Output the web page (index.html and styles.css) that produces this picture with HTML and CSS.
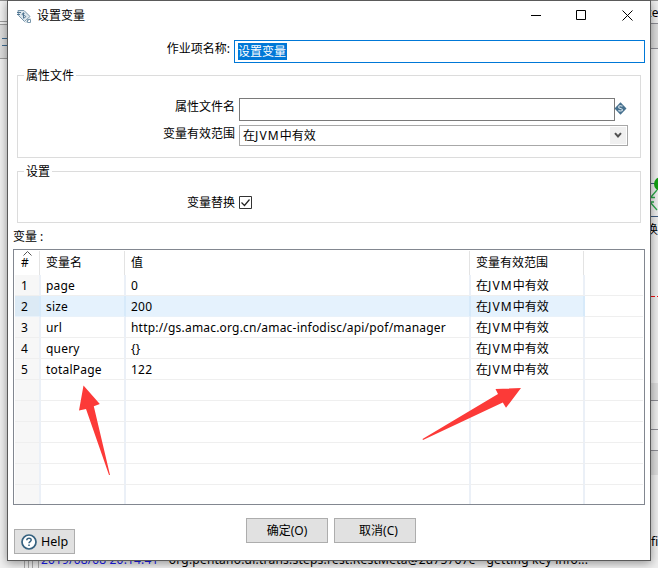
FILE: index.html
```html
<!DOCTYPE html>
<html lang="zh-CN">
<head>
<meta charset="utf-8">
<title>设置变量</title>
<link rel="stylesheet" href="styles.css">
</head>
<body>
<svg class="desktop" width="658" height="568" viewBox="0 0 658 568">
  <rect width="658" height="568" fill="#f0f0f0"/>
  <path fill="#909090" d="M0 0h658v1H0z"/>
  <path fill="#f1f1f1" d="M0 1h8v20H0z"/>
  <path stroke="#9a9a9a" d="M0 21.5h8M0 24.5h8M0 58.5h8"/>
  <path fill="#dcdcdc" d="M0 25h8v33H0z"/>
  <path stroke="#3d6b91" d="M2 38.5h6M2 45.5h6"/>
  <path fill="#eeeeee" d="M650 1h8v567h-8z"/>
  <path fill="#dcdcdc" d="M650 24h8v24h-8zM650 383h8v17h-8zM650 450h8v25h-8z"/>
  <path stroke="#8d8d94" d="M650 23.5h8M650 48.5h8M650 400.5h8M650 429.5h8M650 450.5h8"/>
  <path stroke="#3d5a80" d="M650 183.5h8M650 216.5h8"/>
  <circle cx="661" cy="184" r="7" fill="#12a012"/>
  <path stroke="#2aa84a" fill="none" stroke-width="1.3" d="M657 190l-6 7M650 197.500h5M650 202h4M650 202l7 8"/>
  <path stroke="#f01010" stroke-dasharray="5 2" d="M650 296.5h8"/>
  <path stroke="#aaa" d="M24.5 560v8M28.5 560v8M32.5 560v8M38.5 560v8"/>
</svg>
<span class="behind behind-top">ce</span>
<span class="behind behind-step">换</span>
<span class="behind behind-fi">fi</span>
<div class="behind log"><span class="stamp">2019/08/08 20:14:41</span><span class="message"> - org.pentano.di.trans.steps.rest.RestMeta@2d75767e - getting key info...</span></div>

<main class="dialog">
  <header class="titlebar">
    <svg class="app-icon" width="15" height="15" viewBox="0 0 15 15" fill="none" stroke="#7896ab">
      <path d="M1 1.500h6l6 6-5.500 5-6-6z" fill="#dce6ec"/>
      <path d="M0 3.500h4M0 5.500h3M7.500 4.500c-3-1-3 2-.5 2s2 3-1 2M6.500 3.500v6" stroke="#4f7592"/>
      <path d="M10.500 10.500h3v3h-3zM9 13.500l4-4"/>
    </svg>
    <h1>设置变量</h1>
    <svg class="window-controls" width="106" height="14" viewBox="0 0 106 14" fill="none" stroke="#000">
      <path d="M3 7.500h10M48.500 2.500h9v9h-9zM94.500 2.500l10 10M104.500 2.500l-10 10"/>
    </svg>
  </header>
  <div class="name-row">
    <label>作业项名称:</label>
    <div class="input focused"><span class="selection">设置变量</span></div>
  </div>
  <section class="group file-group">
    <h2>属性文件</h2>
    <div class="field-row file-row">
      <label>属性文件名</label>
      <div class="input"></div>
      <svg width="13" height="13" viewBox="0 0 13 13"><path d="M6.500 0.300l6 6.200-6 6.200-6-6.200z" fill="#47718f"/><path d="M8.500 4.300C6.500 3 4.500 4 4.700 5.300c.3 1.500 3.500.8 3.700 2.400.1 1.400-2.300 1.800-4 .8" fill="none" stroke="#dce7ee" stroke-width="1.100"/></svg>
    </div>
    <div class="field-row scope-row">
      <label>变量有效范围</label>
      <div class="select"><span>在<b>JVM</b>中有效</span><i><svg width="8" height="7" viewBox="0 0 8 7"><path d="M1 1.200l3 3.300 3-3.300" fill="none" stroke="#505050" stroke-width="2"/></svg></i></div>
    </div>
  </section>
  <section class="group settings-group">
    <h2>设置</h2>
    <div class="field-row">
      <label>变量替换</label>
      <svg width="13" height="13" viewBox="0 0 13 13" fill="none"><path d="M.5.5h12v12H.5z" stroke="#333"/><path d="M2.500 6.500l3 3 5-6" stroke="#222" stroke-width="1.200"/></svg>
    </div>
  </section>
  <div class="table-label">变量 :</div>
  <div class="table">
    <div class="row head"><span><svg class="sort" width="9" height="5" viewBox="0 0 9 5"><path d="M.5 4.500l4-4 4 4" fill="none" stroke="#555"/></svg>#</span><span>变量名</span><span>值</span><span>变量有效范围</span><span></span></div>
    <div class="row"><span>1</span><span>page</span><span>0</span><span>在<b>JVM</b>中有效</span><span></span></div>
    <div class="row hot"><span>2</span><span>size</span><span>200</span><span>在<b>JVM</b>中有效</span><span></span></div>
    <div class="row"><span>3</span><span>url</span><span>http://gs.amac.org.cn/amac-infodisc/api/pof/manager</span><span>在<b>JVM</b>中有效</span><span></span></div>
    <div class="row"><span>4</span><span>query</span><span>{}</span><span>在<b>JVM</b>中有效</span><span></span></div>
    <div class="row"><span>5</span><span>totalPage</span><span>122</span><span>在<b>JVM</b>中有效</span><span></span></div>
    <div class="row"><span></span><span></span><span></span><span></span><span></span></div>
    <div class="row"><span></span><span></span><span></span><span></span><span></span></div>
    <div class="row"><span></span><span></span><span></span><span></span><span></span></div>
    <div class="row"><span></span><span></span><span></span><span></span><span></span></div>
    <div class="row"><span></span><span></span><span></span><span></span><span></span></div>
    <div class="row last"><span></span><span></span><span></span><span></span><span></span></div>
  </div>
  <footer class="actions">
    <button class="help"><svg width="16" height="16" viewBox="0 0 16 16" fill="none" stroke="#35617f"><circle cx="8" cy="8" r="7" fill="#fff" stroke-width="1.700"/><path d="M5.800 6.300c0-3 4.500-2.700 4.400-.2 0 1.500-2.200 1.500-2.200 3.200M8 10.500v1.600" stroke-width="1.500"/></svg>Help</button>
    <button class="ok">确定(O)</button>
    <button class="cancel">取消(C)</button>
  </footer>
</main>

<svg class="arrows" width="658" height="568" viewBox="0 0 658 568" fill="#fc3a38">
  <path d="M83.500 385.500L99.800 404l-6 2.200L110 475h-1L86 409l-7 1.500z"/>
  <path d="M521 388l-15 19.800-3.200-5.300L423 440l-.5-1L498 394l-2.500-5z"/>
</svg>
</body>
</html>
```

FILE: styles.css
```css
* { box-sizing: border-box; }
body {
  margin: 0;
  width: 658px;
  height: 568px;
  position: relative;
  overflow: hidden;
  font: 12px/16px "Noto Sans", "Noto Sans CJK SC", sans-serif;
  color: #000;
}
h1, h2 { margin: 0; font: inherit; }
b { font-weight: inherit; letter-spacing: 1.1px; }
svg { display: block; flex: none; }
.desktop, .arrows { position: absolute; left: 0; top: 0; }
.behind { position: absolute; white-space: pre; }
.behind-top { left: 646px; top: 5px; }
.behind-step { left: 646px; top: 222px; }
.behind-fi { left: 651px; top: 534px; }
.log { left: 41px; top: 552px; width: 560px; display: flex; }
.stamp { color: #1a1af0; width: 117px; letter-spacing: .15px; }
.message { letter-spacing: .22px; }
.dialog {
  position: absolute;
  left: 7px;
  top: 0;
  width: 644px;
  height: 561px;
  display: flex;
  flex-direction: column;
  background: #fff;
  border: 1px solid #5a5a5a;
  box-shadow: 0 2px 9px rgba(0, 0, 0, .4);
}
.titlebar {
  height: 39px;
  padding: 7px 16px 0 9px;
  display: flex;
  align-items: flex-start;
}
.titlebar h1 { margin: 0 auto 0 5px; }
.app-icon { margin-top: 1px; }
.name-row { display: flex; height: 35px; }
.name-row label { width: 222px; margin-right: 4px; text-align: right; line-height: 18px; }
.input { height: 23px; border: 1px solid #7a7a7a; background: #fff; }
.focused { width: 411px; border-color: #0078d7; padding: 2px 3px; display: flex; }
.selection { background: #0078d7; color: #fff; height: 17px; line-height: 17px; width: 49px; }
.group { width: 624px; margin-left: 9px; border: 1px solid #dcdcdc; }
.group h2 { background: #fff; padding: 0 2px; width: max-content; margin: -8px 0 0 6px; }
.file-group { height: 83px; }
.settings-group { height: 52px; margin-top: 13px; }
.field-row { display: flex; }
.field-row label { width: 217px; margin-right: 4px; text-align: right; }
.file-row { margin-top: 14px; height: 27px; }
.file-row label { padding-top: 1px; }
.scope-row label { padding-top: 1px; }
.file-row .input { width: 376px; }
.file-row svg { margin: 4px 0 0 -1px; }
.scope-row .select { width: 389px; }
.select {
  height: 21px;
  border: 1px solid #a8a8a8;
  display: flex;
  justify-content: space-between;
  padding: 1px;
  line-height: 18px;
}
.select span { padding-left: 2px; }
.select i { width: 16px; background: #f0f0f0; display: grid; place-items: center; }
.settings-group .field-row { margin-top: 15px; }
.settings-group svg { margin-top: 1px; }
.table-label { margin: 6px 0 0 5px; height: 20px; }
.table {
  width: 632px;
  height: 256px;
  margin-left: 5px;
  border: 1px solid #828790;
  padding: 1px;
}
.row {
  display: grid;
  grid-template-columns: 26px 85px 345px 114px 58px;
  height: 21px;
  line-height: 22px;
}
.row span { height: 21px; border-bottom: 1px solid #efefef; border-right: 2px solid #ebf0f7; padding-left: 5px; white-space: nowrap; }
.row span:first-child { background: #f7f7f7; padding-left: 6px; }
.row span:last-child { border-right: 0; }
.row:not(.head) span:nth-child(2), .row span:nth-child(3) { letter-spacing: .2px; }
.head { height: 24px; line-height: 24px; }
.head span { height: 24px; border-bottom: 0; border-right: 1px solid #e3e3e3; margin-right: 1px; }
.row.head span:first-child { background: #fff; position: relative; }
.head span:last-child { margin-right: 0; }
.sort { position: absolute; left: 8px; top: 0; }
.hot span { background: #e5f2fd; border-right-color: #d7eafa; border-bottom-color: #e9f2fa; }
.row.hot span:first-child { background: #dceaf5; }
.row.hot span:last-child { background: #fff; border-bottom-color: #efefef; }
.last { height: 19px; }
.last span { height: 19px; border-bottom: 0; }
.actions { display: flex; margin-top: 13px; padding-left: 6px; }
button {
  font: inherit;
  color: inherit;
  background: #e1e1e1;
  border: 1px solid #adadad;
  width: 82px;
  height: 25px;
  padding: 0;
  display: flex;
  align-items: center;
  justify-content: center;
}
.help { width: 61px; margin: 11px 171px 0 0; gap: 4px; font-size: 12.5px; }
.cancel { margin-left: 6px; padding-left: 7px; }
```
